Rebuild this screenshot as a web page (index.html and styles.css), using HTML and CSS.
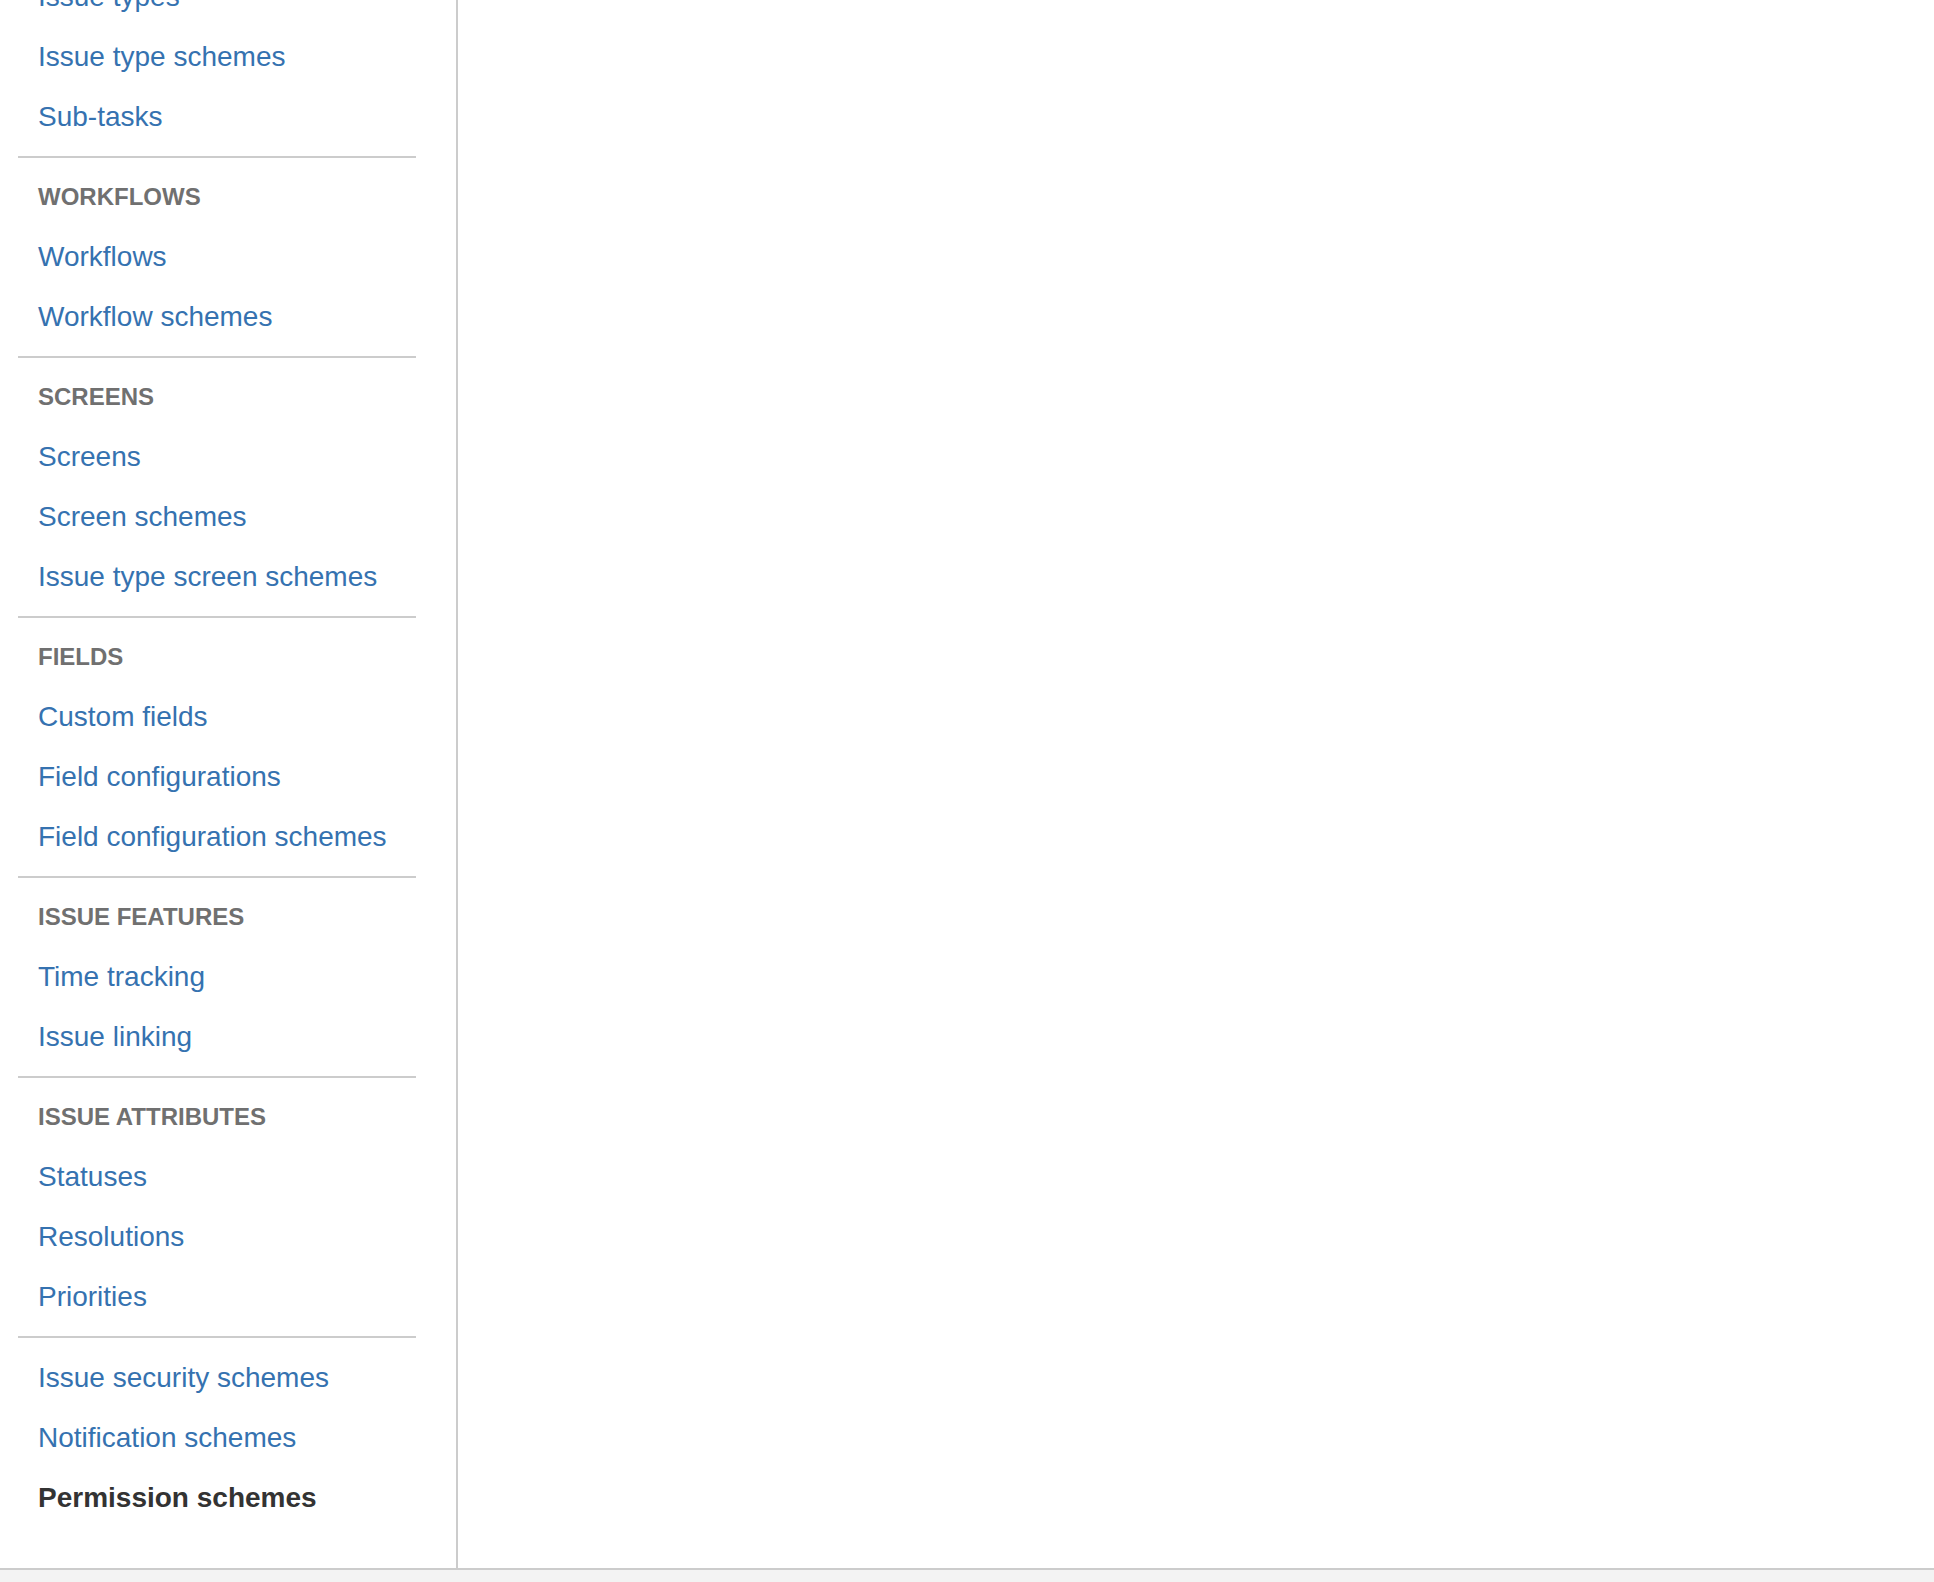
FILE: index.html
```html
<!DOCTYPE html>
<html lang="en">
<head>
<meta charset="utf-8">
<title>Administration</title>
<link rel="stylesheet" href="styles.css">
</head>
<body>
<div class="page">
  <div class="layout">
    <nav class="sidebar">
      <div class="nav">
        <div class="group">
          <a class="item" href="#">Issue types</a>
          <a class="item" href="#">Issue type schemes</a>
          <a class="item" href="#">Sub-tasks</a>
        </div>
        <div class="group">
          <div class="heading">WORKFLOWS</div>
          <a class="item" href="#">Workflows</a>
          <a class="item" href="#">Workflow schemes</a>
        </div>
        <div class="group">
          <div class="heading">SCREENS</div>
          <a class="item" href="#">Screens</a>
          <a class="item" href="#">Screen schemes</a>
          <a class="item" href="#">Issue type screen schemes</a>
        </div>
        <div class="group">
          <div class="heading">FIELDS</div>
          <a class="item" href="#">Custom fields</a>
          <a class="item" href="#">Field configurations</a>
          <a class="item" href="#">Field configuration schemes</a>
        </div>
        <div class="group">
          <div class="heading">ISSUE FEATURES</div>
          <a class="item" href="#">Time tracking</a>
          <a class="item" href="#">Issue linking</a>
        </div>
        <div class="group">
          <div class="heading">ISSUE ATTRIBUTES</div>
          <a class="item" href="#">Statuses</a>
          <a class="item" href="#">Resolutions</a>
          <a class="item" href="#">Priorities</a>
        </div>
        <div class="group last">
          <a class="item" href="#">Issue security schemes</a>
          <a class="item" href="#">Notification schemes</a>
          <a class="item current" href="#">Permission schemes</a>
        </div>
      </div>
    </nav>
    <main class="content"></main>
  </div>
  <footer class="footer"></footer>
</div>
</body>
</html>
```

FILE: styles.css
```css
html, body {
  margin: 0;
  padding: 0;
  background: #ffffff;
}

body {
  font-family: "Liberation Sans", Arial, Helvetica, sans-serif;
  overflow: hidden;
}

.page {
  display: flex;
  flex-direction: column;
  height: 1582px;
}

.layout {
  display: flex;
  height: 1568px;
  overflow: hidden;
}

.sidebar {
  width: 456px;
  flex: 0 0 456px;
  border-right: 2px solid #cccccc;
  overflow: hidden;
}

.nav {
  margin-top: -33px;
  padding: 0 40px 0 18px;
}

.group {
  display: flex;
  flex-direction: column;
  padding: 9px 0;
  border-bottom: 2px solid #cccccc;
}

.group:first-child {
  padding-top: 0;
}

.group.last {
  padding-top: 10px;
  border-bottom: none;
}

.heading {
  height: 60px;
  line-height: 60px;
  padding-left: 20px;
  font-size: 24px;
  font-weight: bold;
  color: #707070;
  white-space: nowrap;
}

.item {
  display: block;
  height: 60px;
  line-height: 60px;
  padding-left: 20px;
  font-size: 28px;
  color: #3572b0;
  text-decoration: none;
  white-space: nowrap;
}

.item.current {
  color: #333333;
  font-weight: bold;
}

.content {
  flex: 1;
  background: #ffffff;
}

.footer {
  flex: 1;
  border-top: 2px solid #cccccc;
  background: #f3f3f3;
}
```
